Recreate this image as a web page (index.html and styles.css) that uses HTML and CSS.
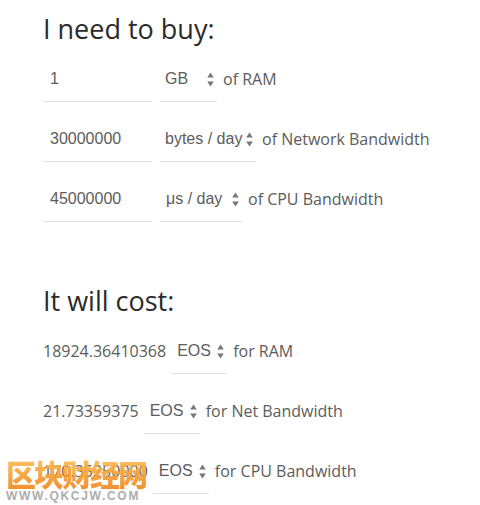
FILE: index.html
```html
<!DOCTYPE html>
<html lang="en">
<head>
<meta charset="utf-8">
<title>EOS resource calculator</title>
<link rel="stylesheet" href="styles.css">
</head>
<body>
<main class="page">
  <h1 class="title">I need to buy:</h1>
  <div class="rows buy">
    <div class="row">
      <input class="amount" type="text" value="1">
      <span class="sel sel-gb"><select><option>GB</option><option>MB</option><option>KB</option></select><svg class="arrows" width="7" height="15" viewBox="0 0 7 15"><path d="M3.5 0.5 L6.8 5.5 L0.2 5.5 Z M3.5 14.5 L6.8 9.5 L0.2 9.5 Z" fill="#777"/></svg></span>
      <span class="label">of RAM</span>
    </div>
    <div class="row">
      <input class="amount" type="text" value="30000000">
      <span class="sel sel-bytes"><select><option>bytes / day</option></select><svg class="arrows" width="7" height="15" viewBox="0 0 7 15"><path d="M3.5 0.5 L6.8 5.5 L0.2 5.5 Z M3.5 14.5 L6.8 9.5 L0.2 9.5 Z" fill="#777"/></svg></span>
      <span class="label">of Network Bandwidth</span>
    </div>
    <div class="row">
      <input class="amount" type="text" value="45000000">
      <span class="sel sel-us"><select><option>μs / day</option></select><svg class="arrows" width="7" height="15" viewBox="0 0 7 15"><path d="M3.5 0.5 L6.8 5.5 L0.2 5.5 Z M3.5 14.5 L6.8 9.5 L0.2 9.5 Z" fill="#777"/></svg></span>
      <span class="label">of CPU Bandwidth</span>
    </div>
  </div>

  <h2 class="title title-cost">It will cost:</h2>
  <div class="rows cost">
    <div class="row">
      <span class="value">18924.36410368</span>
      <span class="sel sel-eos"><select><option>EOS</option></select><svg class="arrows" width="7" height="15" viewBox="0 0 7 15"><path d="M3.5 0.5 L6.8 5.5 L0.2 5.5 Z M3.5 14.5 L6.8 9.5 L0.2 9.5 Z" fill="#777"/></svg></span>
      <span class="label">for RAM</span>
    </div>
    <div class="row">
      <span class="value">21.73359375</span>
      <span class="sel sel-eos"><select><option>EOS</option></select><svg class="arrows" width="7" height="15" viewBox="0 0 7 15"><path d="M3.5 0.5 L6.8 5.5 L0.2 5.5 Z M3.5 14.5 L6.8 9.5 L0.2 9.5 Z" fill="#777"/></svg></span>
      <span class="label">for Net Bandwidth</span>
    </div>
    <div class="row">
      <span class="value">170.35250000</span>
      <span class="sel sel-eos"><select><option>EOS</option></select><svg class="arrows" width="7" height="15" viewBox="0 0 7 15"><path d="M3.5 0.5 L6.8 5.5 L0.2 5.5 Z M3.5 14.5 L6.8 9.5 L0.2 9.5 Z" fill="#777"/></svg></span>
      <span class="label">for CPU Bandwidth</span>
    </div>
  </div>
</main>
<div class="watermark">
  <div class="wm-cn">区块财经网</div>
  <div class="wm-en">WWW.QKCJW.COM</div>
</div>
</body>
</html>
```

FILE: styles.css
```css
html, body {
  margin: 0;
  padding: 0;
  background: #fff;
}

body {
  font-family: "Open Sans", "Liberation Sans", sans-serif;
  color: #5c5c5c;
  font-size: 16px;
}

.page {
  padding: 13px 0 0 43px;
}

.title {
  margin: 0;
  font-family: "Open Sans", sans-serif;
  font-weight: 400;
  font-size: 27px;
  line-height: 32px;
  color: #2b2b2b;
}

.title-cost {
  margin-top: 63px;
}

.rows {
  display: flex;
  flex-direction: column;
  gap: 17px;
  margin-top: 14px;
}

.row {
  display: flex;
  align-items: center;
  height: 43px;
}

.amount {
  box-sizing: border-box;
  width: 109px;
  height: 43px;
  margin: 0 8px 0 0;
  padding: 0 0 3px 7px;
  border: 0;
  border-bottom: 1px solid #e2e2e2;
  outline: none;
  background: transparent;
  font-family: "Liberation Sans", Arial, sans-serif;
  font-size: 16px;
  color: #5c5c5c;
}

.sel {
  position: relative;
  display: inline-flex;
  height: 43px;
}

.sel select {
  -webkit-appearance: none;
  appearance: none;
  box-sizing: border-box;
  height: 43px;
  margin: 0;
  padding: 0 0 3px 5px;
  border: 0;
  border-bottom: 1px solid #e2e2e2;
  border-radius: 0;
  outline: none;
  background: transparent;
  font-family: "Liberation Sans", Arial, sans-serif;
  font-size: 16px;
  color: #5c5c5c;
}

.sel .arrows {
  position: absolute;
  right: 3px;
  top: 13px;
  pointer-events: none;
}

.sel-gb select { width: 57px; }
.sel-bytes select { width: 96px; }
.sel-us select { width: 82px; padding-left: 6px; }
.sel-eos select { width: 56px; padding-left: 6px; }

.label {
  margin: 0 0 4px 6px;
  white-space: nowrap;
}

.cost .value {
  margin: 0 5px 4px 0;
  white-space: nowrap;
}

.watermark {
  position: absolute;
  left: 6px;
  top: 455px;
  pointer-events: none;
}

.wm-cn {
  font-family: "Noto Sans CJK SC", sans-serif;
  font-weight: 900;
  font-size: 30px;
  line-height: 36px;
  letter-spacing: -2px;
  background: linear-gradient(#fcc25a, #f0861c);
  -webkit-background-clip: text;
  background-clip: text;
  color: transparent;
  opacity: 0.92;
}

.wm-en {
  margin-top: -1px;
  font-family: "Liberation Sans", Arial, sans-serif;
  font-weight: 700;
  font-size: 12px;
  line-height: 12px;
  letter-spacing: 1.7px;
  color: #adadad;
}
```
